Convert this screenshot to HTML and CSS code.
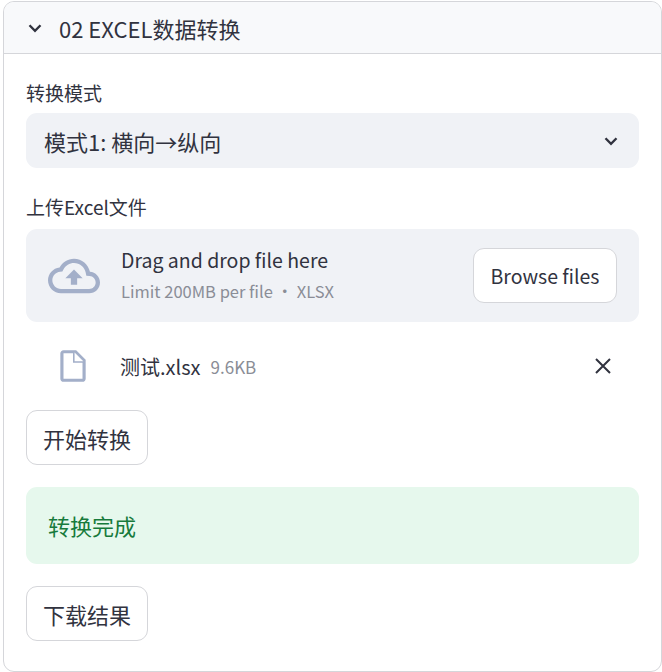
FILE: index.html
```html
<!DOCTYPE html>
<html lang="zh-CN">
<head>
    <meta charset="utf-8" />
    <meta name="viewport" content="width=device-width, initial-scale=1.0" />
    <title>02 EXCEL数据转换</title>
    <link rel="stylesheet" href="styles.css">
</head>
<body>
    <div class="expander">
        <div class="expander-header">
            <svg class="chevron" viewBox="0 0 24 24"><path d="M6 9l6 6 6-6"/></svg>
            <span>02 EXCEL数据转换</span>
        </div>
        <div class="expander-body">
            <label class="field-label">转换模式</label>
            <div class="select">
                <span>模式1: 横向→纵向</span>
                <svg class="chevron" viewBox="0 0 24 24"><path d="M6 9l6 6 6-6"/></svg>
            </div>

            <label class="field-label upload-label">上传Excel文件</label>
            <div class="dropzone">
                <svg class="cloud-icon" viewBox="0 0 24 24"><path d="M19.35 10.04C18.67 6.59 15.64 4 12 4 9.11 4 6.6 5.64 5.35 8.04 2.34 8.36 0 10.91 0 14c0 3.31 2.69 6 6 6h13c2.76 0 5-2.24 5-5 0-2.64-2.05-4.78-4.65-4.96zM19 18H6c-2.21 0-4-1.79-4-4 0-2.05 1.53-3.76 3.56-3.97l1.07-.11.5-.95C8.08 7.14 9.94 6 12 6c2.62 0 4.88 1.86 5.39 4.43l.3 1.5 1.53.11c1.56.1 2.78 1.41 2.78 2.96 0 1.65-1.35 3-3 3zM8 13h2.55v3h2.9v-3H16l-4-4z"/></svg>
                <div class="dropzone-text">
                    <div class="drop-title">Drag and drop file here</div>
                    <div class="drop-limit">Limit 200MB per file • XLSX</div>
                </div>
                <button class="btn browse-btn">Browse files</button>
            </div>

            <div class="file-row">
                <svg class="file-icon" viewBox="0 0 24 24"><path d="M6 2c-1.1 0-2 .9-2 2v16c0 1.1.9 2 2 2h12c1.1 0 2-.9 2-2V8l-6-6H6zm7 7V3.5L18.5 9H13zM6 4h6v6h6v10H6V4z"/></svg>
                <span class="file-name">测试.xlsx</span>
                <span class="file-size">9.6KB</span>
                <svg class="close-icon" viewBox="0 0 24 24"><path d="M5 5l14 14M19 5L5 19"/></svg>
            </div>

            <button class="btn action-btn">开始转换</button>
            <div class="success">转换完成</div>
            <button class="btn action-btn">下载结果</button>
        </div>
    </div>
</body>
</html>
```

FILE: styles.css
```css
body {
    margin: 0;
    font-family: "Noto Sans CJK SC", "Noto Sans", sans-serif;
    color: #31333f;
    background-color: white;
}
.expander {
    box-sizing: border-box;
    width: 659px;
    height: 671px;
    margin: 1px 0 0 3px;
    border: 1px solid #d5d6da;
    border-radius: 11px;
    overflow: hidden;
}
.expander-header {
    display: flex;
    align-items: center;
    height: 51px;
    padding-left: 20px;
    font-size: 22px;
    background-color: #f8f9fb;
    border-bottom: 1px solid #d5d6da;
}
.expander-header span {
    margin-left: 13px;
}
.chevron {
    width: 22px;
    height: 22px;
    flex-shrink: 0;
    fill: none;
    stroke: #31333f;
    stroke-width: 2.6;
}
.expander-body {
    display: flex;
    flex-direction: column;
    align-items: flex-start;
    padding: 25px 22px 0 22px;
}
.field-label {
    height: 27px;
    line-height: 27px;
    font-size: 19px;
}
.select {
    box-sizing: border-box;
    display: flex;
    align-items: center;
    justify-content: space-between;
    width: 613px;
    height: 55px;
    margin-top: 7px;
    padding: 0 17px 0 18px;
    font-size: 22px;
    background-color: #f0f2f6;
    border-radius: 11px;
}
.upload-label {
    margin-top: 25px;
}
.dropzone {
    box-sizing: border-box;
    display: flex;
    align-items: center;
    width: 613px;
    height: 93px;
    margin-top: 9px;
    padding: 0 22px;
    background-color: #f0f2f6;
    border-radius: 11px;
}
.cloud-icon {
    width: 52px;
    height: 52px;
    flex-shrink: 0;
    fill: #a3afc9;
}
.dropzone-text {
    flex: 1;
    margin-left: 21px;
}
.drop-title {
    font-size: 19.5px;
    line-height: 30px;
}
.drop-limit {
    font-size: 16.5px;
    line-height: 32px;
    color: #8a8d96;
}
.btn {
    font-family: inherit;
    color: #31333f;
    background-color: white;
    border: 1px solid #d5d6da;
    border-radius: 11px;
}
.browse-btn {
    width: 144px;
    height: 55px;
    font-size: 19.5px;
}
.file-row {
    display: flex;
    align-items: center;
    width: 613px;
    height: 88px;
}
.file-icon {
    width: 38px;
    height: 38px;
    margin-left: 28px;
    flex-shrink: 0;
    fill: #a3afc9;
}
.file-name {
    margin-left: 28px;
    font-size: 20px;
}
.file-size {
    margin-left: 10px;
    font-size: 17px;
    color: #8a8d96;
}
.close-icon {
    width: 24px;
    height: 24px;
    margin-left: auto;
    margin-right: 24px;
    fill: none;
    stroke: #31333f;
    stroke-width: 2;
}
.action-btn {
    width: 122px;
    height: 55px;
    font-size: 22px;
}
.success {
    box-sizing: border-box;
    width: 613px;
    height: 77px;
    margin: 22px 0;
    padding-left: 22px;
    line-height: 77px;
    font-size: 22px;
    color: #177a3c;
    background-color: #e6f8ed;
    border-radius: 11px;
}
```
